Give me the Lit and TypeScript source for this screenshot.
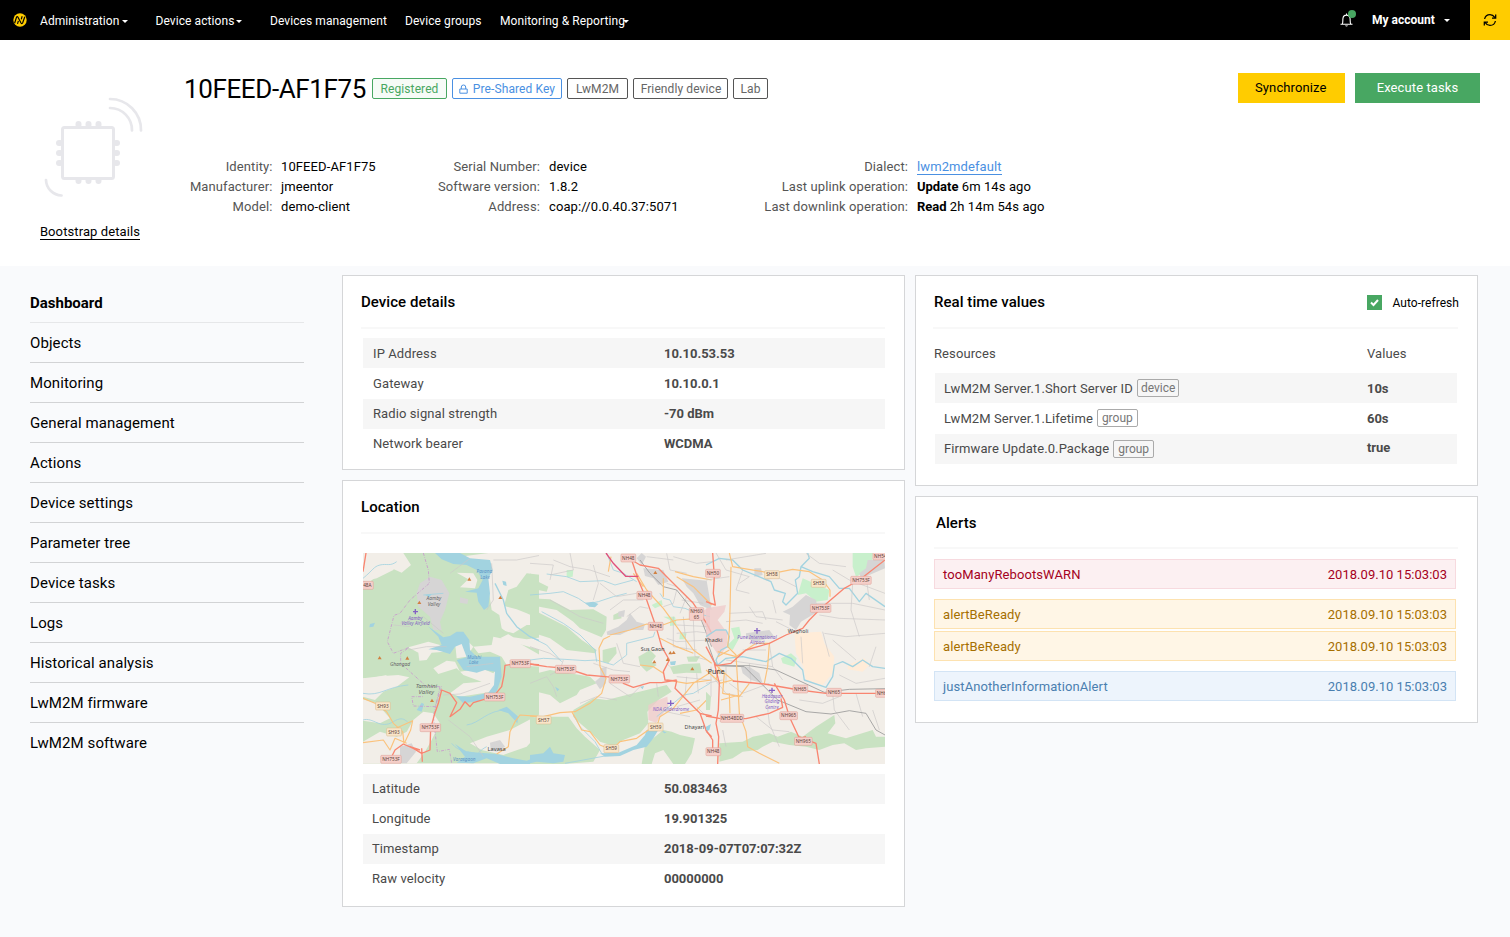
import { LitElement, html, css, svg } from "lit";
import { customElement } from "lit/decorators.js";

const tri = (pts: number[][]) =>
  pts.map(([x, y]) => svg`<path class="peak" d="M${x - 6} ${y + 5}L${x} ${y - 5}L${x + 6} ${y + 5}Z"/>`);

const shields = (items: [string, number, number][], kind: string) =>
  items.map(([t, x, y]) => {
    const w = t.length * 8.6 + 10;
    return svg`<rect class="shield ${kind}" x=${x - w / 2} y=${y - 12} width=${w} height="24" rx="3"/>
      <text class="shield-text" x=${x} y=${y + 5}>${t}</text>`;
  });

@customElement("area-map")
class AreaMap extends LitElement {
  static styles = css`
    :host { display: block; width: 522px; height: 211px; }
    svg { display: block; width: 100%; height: 100%; background: #f2eee8; }
    text { font-family: "Noto Sans", sans-serif; text-anchor: middle; }
    .wood { fill: #c9e2c2; }
    .land { fill: #f2eee8; }
    .park { fill: #c8f0cc; }
    .urban { fill: #d6d5d5; }
    .mil { fill: #efc9c9; opacity: .75; }
    .field { fill: #ffecd8; }
    .water { fill: #a2d3e0; }
    .river { fill: none; stroke: #a2d3e0; stroke-width: 4; stroke-linejoin: round; }
    .stream { fill: none; stroke: #a2d3e0; stroke-width: 2.5; stroke-linejoin: round; }
    .minor { fill: none; stroke: #cbc8c8; stroke-width: 2; stroke-linejoin: round; }
    .rail { fill: none; stroke: #999; stroke-width: 2.5; }
    .border { fill: none; stroke: #c9a5cb; stroke-width: 3; stroke-dasharray: 9 4 2 4; }
    .nh { fill: none; stroke: #f98570; stroke-width: 4; stroke-linejoin: round; }
    .sh { fill: none; stroke: #fbc27c; stroke-width: 3.5; stroke-linejoin: round; }
    .mw { fill: none; stroke: #e0507c; stroke-width: 4; }
    .peak { fill: #d08040; }
    .shield { stroke-width: 1.5; }
    .shield.n { fill: #f6cfc9; stroke: #dd9d94; }
    .shield.s { fill: #f9e5c8; stroke: #d9bb8b; }
    .shield-text { font-size: 14px; fill: #5b3f3a; }
    .town { font-size: 17px; fill: #444; }
    .small { font-size: 16px; }
    .city { font-size: 21px; fill: #333; }
    .place { font-size: 14.5px; font-style: italic; fill: #666; }
    .wide { font-size: 18px; }
    .air { font-size: 14px; font-style: italic; fill: #8461c4; }
    .lake { font-size: 14px; font-style: italic; fill: #5b93c5; }
    .plane { fill: none; stroke: #8461c4; stroke-width: 4; }
  `;

  private west() {
    return svg`<g transform="translate(360 550) scale(.33333)">
      <path class="wood" d="M9 9H545V230L500 220 450 250 420 265 540 300V640H9V440L70 400 80 375 30 385 9 385V95L50 85 100 60 110 40 90 9Z"/>
      <path class="land" d="M20 9H130L153 45 125 68 95 55 60 68 30 95 9 92V60Z"/>
      <path class="land" d="M385 9H545V75L500 70 470 110 445 120 432 168 470 178 500 190 545 210V285L470 270 425 235 418 195 395 180 380 80 330 30 300 20Z"/>
      <path class="wood" d="M425 240L460 250 500 225 545 225V262L500 268 460 262Z"/>
      <path class="land" d="M290 68L340 70 352 90 345 115 300 112 325 88Z"/>
      <path class="land" d="M9 385L70 378 115 375 148 382 110 410 70 425 45 450 9 440Z"/>
      <path class="land" d="M9 448L50 460 90 505 60 520 9 512Z"/>
      <path class="land" d="M160 510L190 485 220 490 240 520 215 570 195 605 170 640H9V575L60 545 110 560 140 545Z"/>
      <path class="land" d="M145 292L205 275 240 285 255 305 215 308 200 330 178 332 175 308Z"/>
      <path class="land" d="M220 355L260 332 285 335 300 365 365 355 400 370 420 340V385L395 425 300 440 270 430 310 400 365 395 310 375 290 355 235 372Z"/>
      <path class="land" d="M400 260L470 275 545 318V350L440 345 425 320 390 305 355 310 340 290 395 285Z"/>
      <path class="land" d="M285 275L310 260 340 290 320 320 290 325Z"/>
      <path class="land" d="M380 560L450 540 545 490V540L500 590 430 615 365 600 330 580Z"/>
      <path class="urban" d="M180 100L210 80 245 90 268 130 255 180 240 215 245 240 220 240 210 200 175 170 170 130Z"/>
      <path class="urban" d="M300 142L325 148 322 162 300 158ZM390 578L420 570 435 590 410 605 392 600ZM120 590L155 580 168 605 140 640H120Z"/>
      <path class="stream" d="M9 85C40 60 40 50 60 45S90 50 110 35M9 430C60 440 80 410 145 405M9 510C40 500 60 540 100 515S140 530 155 515M190 135L250 130M320 525C360 520 380 480 440 480M275 580C300 610 320 600 350 612M380 590C360 600 350 615 340 625"/>
      <path class="water" d="M225 9H300L330 25 390 30 398 60 385 85 390 130 385 170 372 180 355 155 350 128 315 125 355 115 368 90 350 60 320 45 280 42 245 28Z"/>
      <path class="water" d="M203 228L250 262 270 258 290 245 310 245 328 270 330 300 350 320 420 320 425 380 410 425 360 452 310 460 288 438 330 440 385 428 402 405 405 365 375 360 350 368 310 360 290 330 320 322 305 282 285 290 270 312 230 300 205 298 245 285 235 260Z"/>
      <path class="water" d="M415 480L440 470 475 500 472 520 445 490ZM427 92L438 95 440 108 430 105ZM30 222L45 218 40 230 28 232ZM195 135L215 132 208 142ZM170 480L185 458 192 462 185 485Z"/>
      <path class="water" d="M285 582L320 605 360 608 410 612 460 625 500 632 545 615V642H420L380 625 340 640 290 638 315 620Z"/>
      <path class="river" d="M405 100L430 150 440 190 470 230 510 260 545 275"/>
      <path class="minor" d="M395 40L400 150 380 180M400 30L470 30 545 15M270 70L330 25M120 220L190 200 250 250M145 300L200 290 260 290M250 435L300 432 390 400M265 510L330 560 370 620M320 350L400 340M100 225L150 230"/>
      <path class="border" d="M190 9L205 60 208 100 150 150 120 190 102 196 82 275 100 310 148 292 122 310 122 340 200 410 245 410 225 470 160 468 155 440 190 440M240 410L220 500 232 605 268 598 275 640"/>
      <path class="nh" d="M9 65L18 9M9 100L14 95M545 345L480 340 435 346 432 375 425 410 400 440 340 458 330 470 315 455 300 478 270 500 290 458 270 430 245 420 235 460 225 488 212 535 210 600 185 610 160 595 130 582 105 600 90 630M185 595L187 635M180 600L150 590"/>
      <path class="sh" d="M9 445L45 460 80 485 100 520 128 545 132 580M85 545L158 512 152 540 133 580M9 578L70 570 90 600 105 565 140 580M545 500L480 495 465 515 450 545 445 590 410 612"/>
      ${tri([[328, 87], [421, 142], [178, 157], [59, 323], [142, 324], [216, 451]])}
      <path class="plane" d="M166 177V193M159 185H174"/>
      <text class="lake" x="373" y="70">Pavana</text><text class="lake" x="375" y="87">Lake</text>
      <text class="place" x="222" y="151">Aamby</text><text class="place" x="222" y="167">Valley</text>
      <text class="air" x="166" y="209">Aamby</text><text class="air" x="167" y="225">Valley Airfield</text>
      <text class="place" x="120" y="348">Ghangad</text>
      <text class="place wide" x="199" y="413">Tamhini</text><text class="place wide" x="199" y="433">Valley</text>
      <text class="lake" x="343" y="326">Mulshi</text><text class="lake" x="341" y="342">Lake</text>
      <text class="lake" x="313" y="634">Varasgaon</text>
      <text class="town" x="410" y="604">Lavasa</text>
      ${shields([["48A", 22, 106], ["NH753F", 481, 341], ["NH753F", 404, 441], ["NH753F", 211, 533], ["NH753F", 93, 628]], "n")}
      ${shields([["SH93", 69, 468], ["SH93", 102, 546]], "s")}
    </g>`;
  }

  private centre() {
    return svg`<g transform="translate(530 550) scale(.33333)">
      <path class="wood" d="M0 70L25 95 55 110 50 125 0 115ZM0 145L60 148 120 180 190 178 230 200 228 240 215 262 150 235 130 215 80 180 0 165ZM0 175L60 205 110 230 155 270 200 300 195 310 110 300 60 265 0 245Z"/>
      <path class="wood" d="M0 375L60 360 120 370 180 380 200 400 150 420 140 435 90 460 60 435 20 425 0 435Z"/>
      <path class="wood" d="M130 480L190 445 230 450 310 430 410 405 425 425 385 450 352 485 355 520 330 550 280 570 250 588 210 575 180 545 150 520 130 500Z"/>
      <path class="wood" d="M0 502L60 500 115 500 140 535 165 560 210 600 190 635 100 642H0Z"/>
      <path class="wood" d="M345 585L400 540 425 545 450 555 495 565 485 610 465 642H430L400 600 375 610 365 642H335Z"/>
      <path class="wood" d="M218 300L258 290 260 310 235 340 218 335ZM325 320L360 300 378 318 365 335 380 345 350 365 330 345ZM420 350L460 342 510 340 515 370 470 368 430 372ZM250 195L270 185 275 205 250 210ZM470 320L510 318 500 335 475 335Z"/>
      <path class="park" d="M110 60L130 60 128 80 110 82ZM365 165L395 150 398 165 375 175ZM450 250L470 250 465 268 448 268ZM400 200L435 200 440 225 420 228 420 210Z"/>
      <path class="urban" d="M340 55L400 60 415 95 385 105 370 85 345 78ZM455 85L530 92 545 180 510 165 490 130 470 110ZM230 245L265 230 290 210 300 190 320 215 345 222 340 240 300 240 270 255 232 255ZM210 355L230 350 228 400 210 418 195 395 212 380ZM265 185L285 180 282 200 265 200ZM335 9L320 25 335 45 348 20Z"/>
      <path class="mil" d="M355 465L385 450 412 440 415 470 400 490 378 518 355 510ZM515 185L540 170V250L520 225Z"/>
      <path class="water" d="M165 158L190 155 205 162 195 172 178 170ZM0 615L40 610 60 590 70 610 105 615 100 635 70 640 20 635 0 640Z"/>
      <path class="water" d="M210 610L265 608 320 585 345 555 350 540 388 535 370 565 350 590 310 600 270 618 225 620ZM420 335L438 333 435 345 422 345ZM75 410L88 418 82 424ZM330 410L342 408 338 418ZM395 540L410 548 402 550Z"/>
      <path class="stream" d="M50 72L110 80 150 95 220 92 255 105 310 90M0 135L60 130 100 125 145 145 170 162 205 155 250 140 290 130M0 260L50 285 95 335M35 185L100 220 150 255 195 300 200 335M0 330L40 325 105 328 165 332 200 330 250 345 290 315 290 280 370 260 375 245M230 9L250 60 280 70 320 95M130 495L150 530 195 575 215 610M390 130L400 145 420 150 430 170 465 175 500 190 540 200M380 500L430 460 460 435 490 430 540 400M105 640L160 630 225 618"/>
      <path class="minor" d="M70 30L120 50 180 60 240 80M120 9L130 60 60 75M0 40L70 45 60 90M190 45L205 100 190 150M210 100L260 140 320 130M240 180L280 150 340 150M60 150L150 200 220 220M260 280L280 340 330 350M100 330L90 360 60 375M190 340L250 360 300 365M240 400L300 440 340 400M50 380L70 410 80 440M150 460L200 440 260 450M290 200L330 170 355 175M410 10L420 60 470 70M430 20L500 40 545 35M350 20L430 30M440 250L500 245 540 250M430 200L430 290 500 300M460 200L470 300M490 210L495 320 530 330M410 265L440 275 540 270M440 225L540 230M440 380L540 390M470 380L465 440M500 370L505 430M420 350L410 340M440 120L430 160 400 170M470 140L450 190M390 480L430 490 480 500M500 470L530 500M440 470L510 450M380 400L385 440M0 290L60 310 90 330M0 400L50 380M410 100L440 110M455 150L520 160"/>
      <path class="rail" d="M330 30L360 70 400 110 440 120 480 170 510 200 545 290"/>
      <path class="sh" d="M235 65L243 20M320 70L350 120 400 175 440 230 490 300 545 340M435 65L490 80 545 90M440 80L490 110 545 165M240 255L300 240 350 222 390 228 440 210 510 205M240 258L220 268 207 295 210 350 228 385 215 430 180 460 135 485 90 488 40 500 0 498M125 485L140 510 155 540 180 545 210 585 245 600 270 575 320 565 355 540 380 530 390 500 430 475 490 400 545 365M330 345L370 350 400 370M400 85L400 140M390 265L440 290 490 310M410 390L470 400 545 390M450 490L500 480 540 440M310 70L340 110"/>
      <path class="nh" d="M305 30L330 45 385 55 420 90 490 160 530 220 545 250M305 30L325 90 350 150 378 230 395 290 418 330 400 365 405 390 440 393 435 415 480 460 510 490 530 545 545 560M0 342L50 350 110 355 170 375 225 380 290 385 280 400 310 412 360 398 395 398 440 390M510 490L545 498"/>
      <path class="mw" d="M228 9L250 40 287 79H325"/>
      ${tri([[376, 67], [421, 308], [431, 307], [413, 328], [373, 335], [487, 356]])}
      <path class="plane" d="M422 451V468M412 460H432"/>
      <text class="town small" x="368" y="303">Sus Gaon</text>
      <text class="air" x="423" y="483">NDA Gliderdrome</text>
      <text class="town small" x="493" y="536">Dhayari</text>
      ${shields([["NH48", 295, 24], ["NH48", 343, 136], ["NH48", 377, 229], ["NH753F", 107, 358], ["NH753F", 268, 387]], "n")}
      ${shields([["SH57", 41, 510], ["SH59", 377, 531], ["SH59", 244, 596]], "s")}
    </g>`;
  }

  private east() {
    return svg`<g transform="translate(706 550) scale(.33333)">
      <path class="field" d="M265 250L345 245 355 280 385 320 380 370 350 405 300 390 292 350 270 310ZM425 345L475 325 490 345 470 365 425 358Z"/>
      <path class="wood" d="M40 580L110 575 140 560 190 550 215 560 255 545 290 560 330 530 385 495 388 520 365 550 420 565 500 540 510 560 537 560V590L480 595 450 600 415 580 380 585 340 600 300 590 250 585 200 575 170 590 155 600 110 605 80 625 40 635ZM0 425L15 440 12 480 0 480Z"/>
      <path class="park" d="M290 85L370 120 365 150 330 155 300 130 275 135ZM440 9H500L498 50 470 70 450 80 440 50ZM225 325L255 310 272 325 265 350 230 340ZM75 235L100 230 105 255 80 300 60 290 85 265Z"/>
      <path class="urban" d="M260 170L300 135 330 150 335 185 310 200 285 215 270 240 250 225 252 195 230 185ZM145 55L165 55 170 75 145 80ZM485 30L535 30 537 55 490 75 465 85 460 70 480 55ZM120 250L190 240 205 260 150 275 120 265ZM105 350L130 350 160 370 170 400 135 390 110 370Z"/>
      <path class="mil" d="M0 175L60 165 55 185 35 210 65 250 62 290 40 320 0 260Z"/>
      <path class="water" d="M0 530L15 522 10 540 0 545Z"/>
      <path class="river" d="M305 9L310 25 285 50 280 80 268 90 275 130 240 165 230 155 238 130 205 120 195 95 110 60 80 30 40 25 0 45M285 50L320 65 370 80 400 115 430 115 460 155 480 130 537 170M0 260L30 240 60 240 70 260 65 290 45 300 30 330 35 345 60 325 110 320 180 335 220 310 255 325 290 360 295 390 360 412 380 380 385 345 410 335 440 350 470 330 500 350 537 355"/>
      <path class="minor" d="M30 9L60 60 130 80 100 100M0 90L70 80M60 30L120 20 180 10M180 90L210 80 270 110M110 60L90 120 130 130M130 170L150 200 230 210M70 190L170 185 180 210M60 215L120 210 170 220M200 150L210 190M300 10L340 40 420 50M380 60L430 90 537 130M330 160L440 160 537 180M340 195L400 205 537 210M355 250L420 260 537 250M380 270L450 330M440 100L435 180 460 260M480 80L490 150M510 290L490 350M400 375L450 400 537 385M350 245L370 320M285 260L290 340M190 280L200 350M210 215L260 240M60 330L200 350 230 390M70 400L110 430 190 400M110 300L180 300M380 430L385 480 430 540M450 430L470 500M280 450L350 460 400 440M150 500L200 540 250 545M180 430L190 520 220 590M50 540L60 590M20 380L60 430 110 440M0 400L50 390M15 350V440M60 350V400M130 340L135 400M500 480L520 540"/>
      <path class="rail" d="M0 265L25 335 35 347 130 347 210 360 355 427M35 347L115 350 155 390 215 450 300 485 375 492 430 482 480 490 510 540 537 555M355 427L430 418 537 416"/>
      <path class="sh" d="M70 9L80 50 110 55 200 70 260 58 310 65 350 90 372 120V140M75 50L72 180 70 240 65 290 90 315 95 395 100 490 120 545 125 590 160 610 220 640M40 350L30 390M35 305L90 320 150 280 190 280 185 350 175 400M45 360L85 395M25 340L55 370 50 430 100 440 130 400M35 320L70 300M45 450L100 435M0 360L45 400M40 400L80 390M70 430L72 490"/>
      <path class="nh" d="M20 9L25 80 22 130 28 165 0 155M537 30L460 90 415 115 345 175 310 210 290 235 240 255 190 280 120 300 75 340 30 347 0 290M25 340L40 400 37 480 30 520 38 560 35 642M80 393L175 402 280 420 360 430H537M205 400L235 450 250 500 278 560 330 580 340 642M0 498L40 505 120 506 190 490 230 472 225 445M0 540L20 570 20 600M280 565L300 560"/>
      <path class="plane" d="M153 234V251M144 242H163M198 413V429M189 421H207"/>
      <text class="town small" x="23" y="275">Khadki</text>
      <text class="city" x="31" y="371">Pune</text>
      <text class="town small" x="276" y="250">Wagholi</text>
      <text class="air" x="153" y="266">Pune International</text><text class="air" x="154" y="282">Airport</text>
      <text class="air" x="198" y="444">Hadapsar</text><text class="air" x="198" y="460">Gliding</text><text class="air" x="198" y="476">Centre</text>
      ${shields([["NH50", 21, 70], ["NH753F", 465, 91], ["NH753F", 344, 175], ["NH65", 283, 417], ["NH65", 384, 427], ["NH65", 531, 430], ["NH548DD", 78, 505], ["NH965", 248, 497], ["NH965", 292, 574], ["NH48", 22, 605], ["NH54", 523, 18]], "n")}
      ${shields([["SH58", 198, 74], ["SH58", 338, 100]], "s")}
      <rect class="shield n" x="-50" y="173" width="43" height="38" rx="3"/>
      <text class="shield-text" x="-28.500" y="190">NH60</text><text class="shield-text" x="-28.500" y="206">65</text>
    </g>`;
  }

  render() {
    return html`<svg viewBox="363 553 522 211">${this.west()}
      <rect class="land" x="539" y="553" width="346" height="211"/>${this.centre()}${this.east()}</svg>`;
  }
}

const caret = html`<i class="caret"></i>`;

@customElement("app-root")
class AppRoot extends LitElement {
  static styles = css`
    :host { display: block; width: 1510px; height: 937px; overflow: hidden; background: #f9fafc; font: 13px/20px Roboto, sans-serif; letter-spacing: .1px; color: #000; }
    * { box-sizing: border-box; }
    .bar { display: flex; align-items: center; height: 40px; background: #000; color: #fff; font-size: 12px; letter-spacing: .08px; }
    .logo { width: 14px; height: 14px; margin: 0 13px; flex: none; }
    .nav { display: flex; align-items: center; white-space: nowrap; padding-top: 2px; }
    .n1 { width: 115.5px; } .n2 { width: 114.5px; } .n3 { width: 135px; } .n4 { width: 95px; }
    .caret { display: inline-block; border: 3.5px solid transparent; border-top-color: currentColor; border-bottom: 0; margin: 1px 0 0 2px; }
    .overlap .caret { margin-left: -2px; }
    .bell { margin-left: auto; width: 18px; height: 20px; margin-right: 14px; }
    .account { font-weight: 700; letter-spacing: 0; width: 98px; display: flex; align-items: center; }
    .account .caret { margin-left: 9px; }
    .sync { width: 40px; height: 40px; background: #fc0; display: flex; align-items: center; justify-content: center; }
    .head { display: flex; height: 226px; background: #fff; }
    .device { width: 180px; padding-top: 50px; text-align: center; }
    .device svg { display: block; margin-left: 40px; width: 110px; height: 116px; }
    .boot { display: inline-block; margin-top: 18px; line-height: 15px; border-bottom: 1px solid #000; }
    .main { flex: 1; padding: 33px 30px 0 4px; }
    .title { display: flex; align-items: center; height: 30px; }
    h1 { font-size: 26px; font-weight: 400; letter-spacing: -.38px; margin: 0 5px 0 0; padding: 1px 0 0; width: 183px; white-space: nowrap; }
    .tag { height: 21px; line-height: 20px; border: 1px solid #555; border-radius: 2px; color: #666; font-size: 12px; text-align: center; margin-right: 5px; letter-spacing: .1px; white-space: nowrap; }
    .t1 { width: 75px; border-color: #48a762; color: #48a762; background: #f6fbf7; }
    .t2 { width: 110px; border-color: #4a90e2; color: #4a90e2; }
    .t2 svg { width: 9px; height: 10px; margin-right: 5px; vertical-align: -1px; }
    .t3 { width: 61px; } .t4 { width: 95px; padding-left: 1px; } .t5 { width: 35px; }
    .btn { height: 30px; line-height: 30px; text-align: center; background: #fc0; width: 107px; margin-left: auto; padding-right: 1.5px; }
    .go { background: #48a762; color: #fff; width: 125px; margin-left: 10px; padding: 0; }
    .info { display: grid; grid-template-columns: 88.500px 119.500px 130px 200px 150px auto; column-gap: 9px; margin-top: 54px; white-space: nowrap; }
    .info > span:nth-child(6n + 2) { margin-left: -.5px; }
    .k { color: #555; text-align: right; }
    .info a { color: #4a90e2; border-bottom: 1px solid #4a90e2; }
    b { font-weight: 700; letter-spacing: -.03px; }
    .body { display: flex; padding: 9px 0 0 30px; }
    .side { width: 274px; margin-right: 38px; padding-top: 8px; }
    .item { height: 40px; line-height: 41px; font-size: 15px; border-bottom: 1px solid #d2d3d5; letter-spacing: .09px; }
    .item.first { font-weight: 700; letter-spacing: 0; border-color: #e6e7e9; }
    .item:last-child { border: 0; }
    .col { width: 563px; margin-right: 10px; display: flex; flex-direction: column; gap: 10px; }
    .card { background: #fff; border: 1px solid #d5d6d8; padding: 0 19px 0 20px; }
    .c1 { height: 195px; } .c2 { height: 427px; } .c3 { height: 211px; padding: 0 20px 0 19px; } .c4 { height: 227px; padding: 0 21px 0 18px; }
    .card h2 { display: flex; align-items: center; justify-content: space-between; height: 53px; margin: 0 0 0 -2px; padding-top: 0; font-size: 15px; font-weight: 500; letter-spacing: .05px; border-bottom: 2px solid #f8f8f8; }
    .card.c3 h2 { margin-right: -1px; padding-left: 1px; }
    .card.c4 h2 { margin: 0 -2px 0 0; padding: 2px 0 0 2px; height: 52px; }
    .check { display: flex; align-items: center; font-size: 12px; font-weight: 400; margin: 2px -1px 0 0; }
    .check svg { width: 15px; height: 15px; margin: 0 10px 1px 0; }
    .rows { padding-top: 9px; color: #4a4a4a; }
    .row { display: flex; height: 30px; line-height: 30px; padding-left: 10px; }
    .row:nth-child(odd) { background: #f6f6f6; }
    .row span { width: 291px; }
    .spread .row { line-height: 31px; }
    .spread .row:nth-child(3) { margin-top: 1px; line-height: 29px; }
    .spread .row:nth-child(4) { line-height: 29px; }
    .loc .row { padding-left: 9px; } .loc .row span { width: 292px; }
    area-map { margin: 19px 0 1px; }
    .cols { display: flex; color: #4a4a4a; padding-top: 15px; height: 35px; line-height: 20px; }
    .cols span { width: 433px; margin-left: -1px; }
    .rt .row { padding-left: 9px; }
    .rt .row span { width: 423px; display: flex; align-items: center; }
    .rt .row:nth-child(3) { line-height: 28px; }
    .rt em { font-style: normal; font-size: 12px; color: #777; border: 1px solid #aaa; border-radius: 2px; height: 18px; line-height: 17px; padding: 0 4px; margin-left: 4px; letter-spacing: 0; }
    .rt .row:first-child em { padding: 0 3px; }
    .alert { display: flex; justify-content: space-between; height: 30px; line-height: 29px; border: 1px solid #f7dadf; background: #fcf0f2; color: #a50021; padding: 0 8px; margin-top: 10px; }
    .time { letter-spacing: .03px; }
    .warn { color: #a66f00; background: #fff6e6; border-color: #fde2b0; }
    .warn + .warn { margin-top: 2px; }
    .note { color: #4a7fb0; background: #edf4fc; border-color: #d3e4f5; }
  `;

  private row(k: unknown, v: string) {
    return html`<div class="row"><span>${k}</span><b>${v}</b></div>`;
  }

  private alert(kind: string, name: string) {
    return html`<div class="alert ${kind}"><span>${name}</span><span class="time">2018.09.10 15:03:03</span></div>`;
  }

  render() {
    const menu = ["Dashboard", "Objects", "Monitoring", "General management", "Actions", "Device settings", "Parameter tree", "Device tasks", "Logs", "Historical analysis", "LwM2M firmware", "LwM2M software"];
    return html`
      <div class="bar">
        <svg class="logo" viewBox="0 0 14 14"><circle cx="7" cy="7" r="6.7" fill="#fc0"/><path d="M1.6 10.200L3.500 4.300Q4.200 3 5 4.300L8 10Q8.900 11.300 9.700 9.800L11.800 3.800M4.500 10.800L5.400 7.800M8.200 6.400L9.200 3.200" fill="none" stroke="#000" stroke-width="1.2"/></svg>
        <div class="nav n1">Administration${caret}</div>
        <div class="nav n2">Device actions${caret}</div>
        <div class="nav n3">Devices management</div>
        <div class="nav n4">Device groups</div>
        <div class="nav overlap">Monitoring &amp; Reporting${caret}</div>
        <svg class="bell" viewBox="0 0 18 20"><path d="M.5 14.3H12.500M2.300 14C3.100 12.5 2.700 10.5 2.900 8.7C3.100 6.2 4.500 5.1 6.500 5.1S9.900 6.2 10.100 8.7C10.300 10.5 9.900 12.5 10.800 14M6.500 3.4V5" fill="none" stroke="#fff" stroke-width="1.1"/><path d="M4.900 15.5H8.100Q6.500 17.4 4.900 15.5Z" fill="#fff"/><circle cx="12" cy="4" r="4" fill="#48a762"/></svg>
        <div class="account">My account${caret}</div>
        <div class="sync"><svg width="14" height="14" viewBox="0 0 14 14" fill="none" stroke="#000" stroke-width="1.25"><path d="M1.6 6C2.2 3 4.4 1.6 7 1.6C9 1.6 10.6 2.6 11.8 4.4M12.4 8C11.8 11 9.6 12.4 7 12.4C5 12.4 3.4 11.4 2.2 9.6M12.7 1.5V5H9M1.3 12.5V9H5"/></svg></div>
      </div>
      <div class="head">
        <div class="device">
          <svg viewBox="40 90 110 116" fill="none" stroke="#e7e7eb" stroke-linecap="round">
            <rect x="62.5" y="127.500" width="51" height="51" rx="2" stroke-width="3"/>
            <path stroke-width="6" d="M78.500 124V125M88.500 124V125M98.500 124V125M78.500 181V180M88.500 181V180M98.500 181V180M59 143H60M59 153H60M59 163H60M117 143H116M117 153H116M117 163H116"/>
            <path stroke-width="2.700" d="M110 99A31 31 0 0 1 141 130.500M110 108A22 22 0 0 1 132 130.500M46 180A16 16 0 0 0 61.500 195.500"/>
          </svg>
          <span class="boot">Bootstrap details</span>
        </div>
        <div class="main">
          <div class="title">
            <h1>10FEED-AF1F75</h1>
            <div class="tag t1">Registered</div>
            <div class="tag t2"><svg viewBox="0 0 9 10" fill="none" stroke="#4a90e2"><path d="M.8 5H8.200V9.200H.8ZM2.300 5V3Q2.300 1 4.500 1T6.700 3V5"/></svg>Pre-Shared Key</div>
            <div class="tag t3">LwM2M</div>
            <div class="tag t4">Friendly device</div>
            <div class="tag t5">Lab</div>
            <div class="btn">Synchronize</div>
            <div class="btn go">Execute tasks</div>
          </div>
          <div class="info">
            <span class="k">Identity:</span><span>10FEED-AF1F75</span><span class="k">Serial Number:</span><span>device</span><span class="k">Dialect:</span><span><a>lwm2mdefault</a></span>
            <span class="k">Manufacturer:</span><span>jmeentor</span><span class="k">Software version:</span><span>1.8.2</span><span class="k">Last uplink operation:</span><span><b>Update</b> 6m 14s ago</span>
            <span class="k">Model:</span><span>demo-client</span><span class="k">Address:</span><span>coap://0.0.40.37:5071</span><span class="k">Last downlink operation:</span><span><b>Read</b> 2h 14m 54s ago</span>
          </div>
        </div>
      </div>
      <div class="body">
        <div class="side">${menu.map((m, i) => html`<div class="item ${i ? "" : "first"}">${m}</div>`)}</div>
        <div class="col">
          <div class="card c1"><h2>Device details</h2>
            <div class="rows spread">${this.row("IP Address", "10.10.53.53")}${this.row("Gateway", "10.10.0.1")}${this.row("Radio signal strength", "-70 dBm")}${this.row("Network bearer", "WCDMA")}</div>
          </div>
          <div class="card c2"><h2>Location</h2><area-map></area-map>
            <div class="rows loc">${this.row("Latitude", "50.083463")}${this.row("Longitude", "19.901325")}${this.row("Timestamp", "2018-09-07T07:07:32Z")}${this.row("Raw velocity", "00000000")}</div>
          </div>
        </div>
        <div class="col">
          <div class="card c3"><h2>Real time values<span class="check"><svg viewBox="0 0 15 15"><rect width="15" height="15" fill="#48a762"/><path d="M4 7.500L6.500 10L11 5" fill="none" stroke="#fff" stroke-width="2"/></svg>Auto-refresh</span></h2>
            <div class="cols"><span>Resources</span>Values</div>
            <div class="rows rt spread">${this.row(html`LwM2M Server.1.Short Server ID<em>device</em>`, "10s")}${this.row(html`LwM2M Server.1.Lifetime<em>group</em>`, "60s")}${this.row(html`Firmware Update.0.Package<em>group</em>`, "true")}</div>
          </div>
          <div class="card c4"><h2>Alerts</h2>
            ${this.alert("", "tooManyRebootsWARN")}${this.alert("warn", "alertBeReady")}${this.alert("warn", "alertBeReady")}${this.alert("note", "justAnotherInformationAlert")}
          </div>
        </div>
      </div>`;
  }
}
